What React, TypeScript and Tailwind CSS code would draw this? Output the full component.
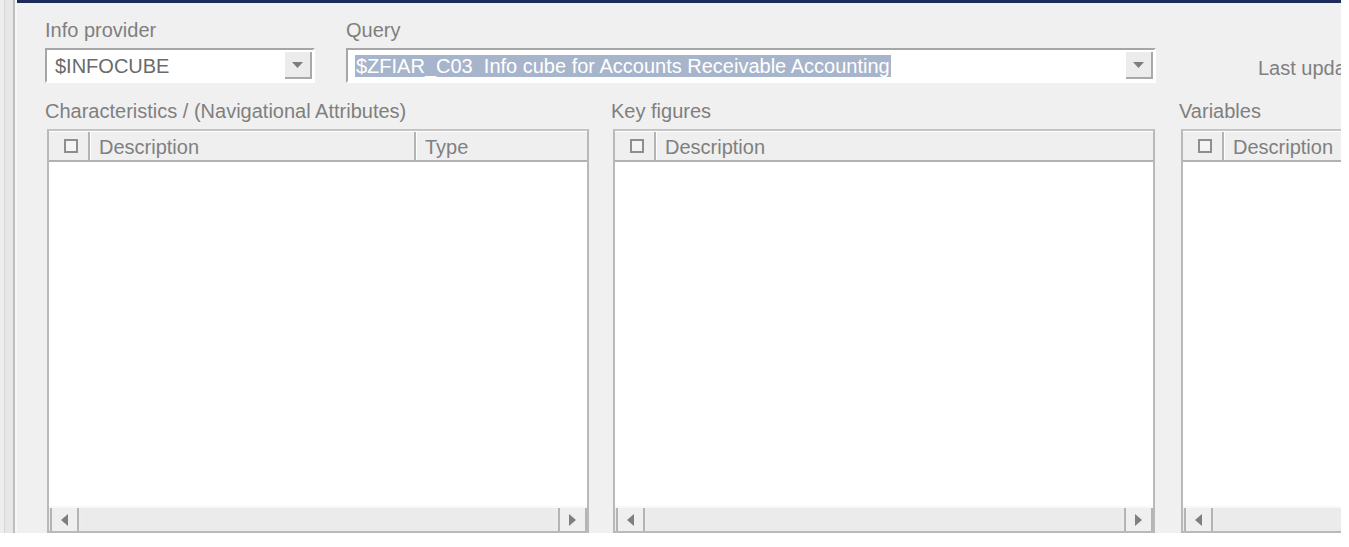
import React from "react";

function Dropdown({ value, width, selected }: { value: string; width: string; selected?: boolean }) {
  return (
    <div className={`${width} h-[35px] flex border-2 border-t-[#a6a6a6] border-l-[#a6a6a6] border-b-white border-r-white bg-white`}>
      <div className="flex-1 flex items-center pl-[7px] overflow-hidden whitespace-pre">
        {selected ? (
          <span className="bg-[#a7b5cc] text-white leading-[22px] px-[1px]">{value}</span>
        ) : (
          <span className="text-[#6a6a6a] pl-[1px]">{value}</span>
        )}
      </div>
      <div className="w-[27px] my-[2px] mr-[1px] bg-[#ececec] border-r-2 border-b-2 border-[#a9a9a9] flex items-center justify-center">
        <svg width="11" height="6" viewBox="0 0 11 6">
          <path d="M0 0 L11 0 L5.5 6 Z" fill="#7d7d7d" />
        </svg>
      </div>
    </div>
  );
}

function Checkbox() {
  return <div className="w-[14px] h-[14px] border-2 border-[#8e8e8e] bg-[#f4f4f4]" />;
}

function ScrollButton({ dir }: { dir: "left" | "right" }) {
  return (
    <div className="w-[29px] h-full border-x-2 border-x-[#b4b4b4] bg-[#efefef] flex items-center justify-center">
      <svg width="7" height="12" viewBox="0 0 7 12">
        <path d={dir === "left" ? "M7 0 L0 6 L7 12 Z" : "M0 0 L7 6 L0 12 Z"} fill="#7f7f7f" />
      </svg>
    </div>
  );
}

function Grid({ columns }: { columns: { label: string; width?: string }[] }) {
  return (
    <div className="ml-[2px] w-[542px] flex-1 flex flex-col border-2 border-[#b9b9b9] border-t-[#c4c4c4] bg-white">
      <div className="h-[31px] flex bg-[#efefef] border-b-2 border-[#b2b2b2] border-t border-t-white">
        <div className="w-[40px] flex items-center justify-center border-r-2 border-[#b4b4b4] ml-[1px] pl-[3px]">
          <Checkbox />
        </div>
        {columns.map((c, i) => (
          <div
            key={i}
            className={`${c.width ?? "flex-1"} flex items-center pt-[2px] pl-[8px] text-[#808080] border-l border-white ${
              c.width ? "border-r-2 border-r-[#b4b4b4]" : ""
            }`}
          >
            {c.label}
          </div>
        ))}
      </div>
      <div className="flex-1" />
      <div className="h-[25px] flex bg-[#ececec] border-t-2 border-t-[#f8f8f8] pl-[1px]">
        <ScrollButton dir="left" />
        <div className="flex-1 ml-[4px] mr-[2px] bg-[#ebebeb]" />
        <ScrollButton dir="right" />
      </div>
    </div>
  );
}

export default function App() {
  return (
    <div className="w-[1349px] h-[547px] bg-white overflow-hidden font-['Liberation_Sans',Arial,sans-serif] text-[20px] leading-[22px]">
      <div className="flex w-[1341px] h-[533px]">
        {/* left window frame */}
        <div className="w-[17px] flex bg-[#eeeeee]">
          <div className="w-[4px]" />
          <div className="w-[1px] bg-[#d6d6d6]" />
          <div className="w-[8px] bg-[#e7e7e7]" />
          <div className="w-[2px] bg-[#bdbdbd]" />
          <div className="w-[2px] bg-[#f7f7f7]" />
        </div>

        <div className="flex-1 min-w-0 flex flex-col bg-[#f0f0f0] border-t-[3px] border-[#1d2b5b] pl-[28px] pt-[16px] overflow-hidden">
          {/* provider / query row */}
          <div className="flex">
            <div className="w-[270px] flex flex-col">
              <span className="text-[#7f7f7f] mb-[7px]">Info provider</span>
              <Dropdown value="$INFOCUBE" width="w-[270px]" />
            </div>
            <div className="ml-[31px] w-[810px] flex flex-col">
              <span className="text-[#7f7f7f] mb-[7px]">Query</span>
              <Dropdown
                value="$ZFIAR_C03  Info cube for Accounts Receivable Accounting"
                width="w-[810px]"
                selected
              />
            </div>
            <div className="ml-[102px] pt-[38px] whitespace-nowrap text-[#7f7f7f]">Last updated</div>
          </div>

          {/* lists */}
          <div className="flex flex-1 mt-[17px] min-h-0">
            <div className="w-[566px] shrink-0 flex flex-col">
              <span className="text-[#7f7f7f] mb-[7px]">Characteristics / (Navigational Attributes)</span>
              <Grid columns={[{ label: "Description", width: "w-[326px]" }, { label: "Type" }]} />
            </div>
            <div className="w-[568px] shrink-0 flex flex-col">
              <span className="text-[#7f7f7f] mb-[7px]">Key figures</span>
              <Grid columns={[{ label: "Description" }]} />
            </div>
            <div className="w-[566px] shrink-0 flex flex-col">
              <span className="text-[#7f7f7f] mb-[7px]">Variables</span>
              <Grid columns={[{ label: "Description" }]} />
            </div>
          </div>
        </div>
      </div>
    </div>
  );
}
